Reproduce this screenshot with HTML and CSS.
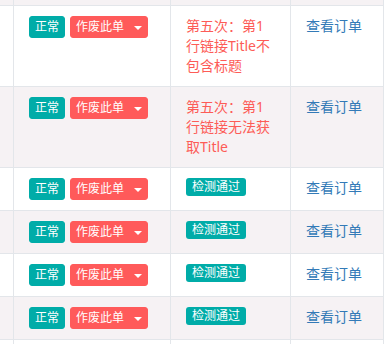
FILE: index.html
```html
<!DOCTYPE html>
<html lang="zh-CN">

<head>
    <meta charset="UTF-8">
    <meta name="viewport" content="width=device-width, initial-scale=1.0">
    <title>订单检测列表</title>
    <link rel="stylesheet" href="styles.css">
</head>

<body>
    <table class="order-table">
        <colgroup>
            <col class="col-id">
            <col class="col-state">
            <col class="col-check">
            <col class="col-op">
        </colgroup>
        <tbody>
            <tr class="stub striped">
                <td></td><td></td><td></td><td></td>
            </tr>
            <tr>
                <td></td>
                <td>
                    <div class="actions">
                        <span class="btn-xs btn-ok">正常</span>
                        <span class="btn-xs btn-void">作废此单<span class="caret"></span></span>
                    </div>
                </td>
                <td class="check-fail">第五次：第1行链接Title不包含标题</td>
                <td><a href="#" class="view-link">查看订单</a></td>
            </tr>
            <tr class="striped">
                <td></td>
                <td>
                    <div class="actions">
                        <span class="btn-xs btn-ok">正常</span>
                        <span class="btn-xs btn-void">作废此单<span class="caret"></span></span>
                    </div>
                </td>
                <td class="check-fail">第五次：第1行链接无法获取Title</td>
                <td><a href="#" class="view-link">查看订单</a></td>
            </tr>
            <tr>
                <td></td>
                <td>
                    <div class="actions">
                        <span class="btn-xs btn-ok">正常</span>
                        <span class="btn-xs btn-void">作废此单<span class="caret"></span></span>
                    </div>
                </td>
                <td><span class="label-pass">检测通过</span></td>
                <td><a href="#" class="view-link">查看订单</a></td>
            </tr>
            <tr class="striped">
                <td></td>
                <td>
                    <div class="actions">
                        <span class="btn-xs btn-ok">正常</span>
                        <span class="btn-xs btn-void">作废此单<span class="caret"></span></span>
                    </div>
                </td>
                <td><span class="label-pass">检测通过</span></td>
                <td><a href="#" class="view-link">查看订单</a></td>
            </tr>
            <tr>
                <td></td>
                <td>
                    <div class="actions">
                        <span class="btn-xs btn-ok">正常</span>
                        <span class="btn-xs btn-void">作废此单<span class="caret"></span></span>
                    </div>
                </td>
                <td><span class="label-pass">检测通过</span></td>
                <td><a href="#" class="view-link">查看订单</a></td>
            </tr>
            <tr class="striped">
                <td></td>
                <td>
                    <div class="actions">
                        <span class="btn-xs btn-ok">正常</span>
                        <span class="btn-xs btn-void">作废此单<span class="caret"></span></span>
                    </div>
                </td>
                <td><span class="label-pass">检测通过</span></td>
                <td><a href="#" class="view-link">查看订单</a></td>
            </tr>
            <tr class="stub">
                <td></td><td></td><td></td><td></td>
            </tr>
        </tbody>
    </table>
</body>

</html>
```

FILE: styles.css
```css
html,
body {
    overflow: hidden;
}

body {
    margin: 0;
    padding: 0;
    background-color: #ffffff;
    font-family: "Noto Sans", "Noto Sans CJK SC", sans-serif;
    font-size: 14px;
    line-height: 20px;
    color: #333333;
}

.order-table {
    width: 384px;
    table-layout: fixed;
    border-collapse: separate;
    border-spacing: 0;
}

.col-id {
    width: 14px;
}

.col-state {
    width: 157px;
}

.col-check {
    width: 120px;
}

.col-op {
    width: 93px;
}

.order-table td {
    box-sizing: border-box;
    padding: 10px 15px;
    vertical-align: top;
    border-right: 1px solid #e3e6ea;
    border-bottom: 1px solid #e3e6ea;
}

.order-table td:first-child {
    padding: 0;
}

.striped td {
    background-color: #f6f2f4;
}

.stub td {
    padding: 0;
    height: 6px;
}

.actions {
    display: flex;
    gap: 5px;
}

.btn-xs {
    display: inline-block;
    padding: 1px 5px;
    font-size: 12px;
    line-height: 18px;
    color: #ffffff;
    border: 1px solid transparent;
    border-radius: 3px;
    white-space: nowrap;
}

.btn-ok {
    background-color: #00aca8;
    border-color: #00aca8;
}

.btn-void {
    background-color: #ff5a5a;
    border-color: #ff5a5a;
}

.caret {
    display: inline-block;
    width: 0;
    height: 0;
    margin-left: 10px;
    vertical-align: middle;
    border-top: 4px solid #ffffff;
    border-left: 4px solid transparent;
    border-right: 4px solid transparent;
}

.check-fail {
    color: #fd5c57;
}

.label-pass {
    display: inline-block;
    padding: 0 6px;
    font-size: 12px;
    line-height: 18px;
    color: #ffffff;
    background-color: #00aca8;
    border-radius: 3px;
    vertical-align: top;
}

.view-link {
    color: #337ab7;
    text-decoration: none;
}
```
